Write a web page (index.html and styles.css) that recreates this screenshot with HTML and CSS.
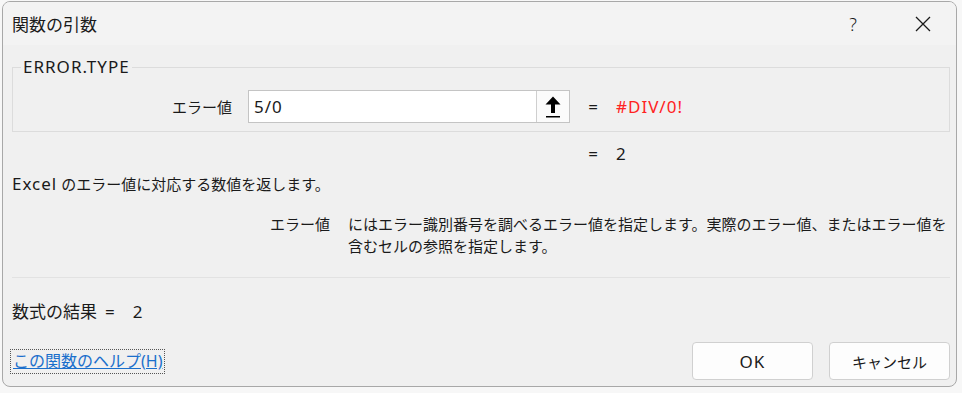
FILE: index.html
```html
<!DOCTYPE html>
<html lang="ja">
<head>
    <meta charset="UTF-8">
    <title>関数の引数</title>
    <link rel="stylesheet" href="styles.css">
</head>
<body>
    <div class="window">
        <div class="titlebar">
            <div class="title">関数の引数</div>
            <div class="caption-btn help">?</div>
            <div class="caption-btn close">
                <svg width="16" height="16" viewBox="0 0 16 16"><path d="M1 1 L15 15 M15 1 L1 15" stroke="#1a1a1a" stroke-width="1.3" fill="none"/></svg>
            </div>
        </div>
        <div class="content">
            <fieldset class="group">
                <legend class="lat">ERROR.TYPE</legend>
                <div class="argrow">
                    <div class="arglabel">エラー値</div>
                    <div class="argbox">
                        <div class="argvalue lat">5/0</div>
                        <div class="refbtn">
                            <svg width="16" height="24" viewBox="0 0 16 24">
                                <polygon points="0.5,9.5 8,1.5 15.5,9.5 10,9.5 10,18 6,18 6,9.5" fill="#000"/>
                                <rect x="1" y="21" width="14" height="1.5" fill="#000"/>
                            </svg>
                        </div>
                    </div>
                    <div class="eq lat">=</div>
                    <div class="res lat error">#DIV/0!</div>
                </div>
            </fieldset>

            <div class="argrow result">
                <div></div>
                <div></div>
                <div class="eq lat">=</div>
                <div class="res lat">2</div>
            </div>

            <div class="summary"><span class="lat">Excel</span> のエラー値に対応する数値を返します。</div>

            <div class="argdesc">
                <div class="argdesc-name">エラー値</div>
                <div class="argdesc-text">にはエラー識別番号を調べるエラー値を指定します。実際のエラー値、またはエラー値を含むセルの参照を指定します。</div>
            </div>

            <div class="separator"></div>

            <div class="formula">数式の結果<span class="lat formula-eq">=</span><span class="lat formula-val">2</span></div>

            <div class="footer">
                <a class="helplink" href="#">この関数のヘルプ(H)</a>
                <div class="buttons">
                    <div class="btn"><span class="lat">OK</span></div>
                    <div class="btn">キャンセル</div>
                </div>
            </div>
        </div>
    </div>
</body>
</html>
```

FILE: styles.css
```css
body {
    margin: 0;
    background-color: #f7f7f7;
    font-family: "Noto Sans", "Noto Sans CJK JP", sans-serif;
    font-size: 15px;
    color: #1a1a1a;
}
.lat {
    font-size: 17px;
    letter-spacing: 1px;
}
.window {
    width: 955px;
    height: 386px;
    margin: 1px 0 0 2px;
    border: 1px solid #a8a8a8;
    border-radius: 8px;
    background-color: #f0f0f0;
    overflow: hidden;
    box-sizing: border-box;
}
.titlebar {
    height: 43px;
    display: flex;
    align-items: center;
    background-color: #f3f3f3;
}
.title {
    flex: 1;
    padding-left: 9px;
    font-size: 17px;
}
.caption-btn {
    width: 46px;
    height: 43px;
    display: flex;
    align-items: center;
    justify-content: center;
}
.help {
    font-size: 18px;
    font-weight: 300;
    margin-right: 24px;
}
.close {
    margin-right: 10px;
}
.content {
    padding: 0 6px 0 9px;
}
.group {
    margin: 12px 0 0 0;
    padding: 13px 0 8px 0;
    border: 1px solid #dcdcdc;
    width: 938px;
    box-sizing: border-box;
}
.group legend {
    margin-left: 8px;
    padding: 0 2px;
    line-height: 20px;
}
.argrow {
    display: grid;
    grid-template-columns: 219px 322px 14px 1fr;
    column-gap: 16px;
    align-items: center;
}
.arglabel {
    text-align: right;
}
.argbox {
    height: 33px;
    display: flex;
    border: 1px solid #c4c4c4;
    background-color: #fff;
    box-sizing: border-box;
}
.argvalue {
    flex: 1;
    padding-left: 5px;
    line-height: 31px;
}
.refbtn {
    width: 32px;
    border-left: 1px solid #cfcfcf;
    background-color: #fbfbfb;
    display: flex;
    align-items: center;
    justify-content: center;
}
.eq {
    text-align: center;
    letter-spacing: 0;
}
.error {
    color: #ff2222;
}
.result {
    margin-top: 12px;
    padding-left: 1px;
    line-height: 20px;
}
.summary {
    margin-top: 10px;
    line-height: 20px;
}
.argdesc {
    margin-top: 19px;
    display: flex;
    line-height: 22px;
}
.argdesc-name {
    width: 336px;
    text-align: right;
    padding-right: 18px;
    box-sizing: border-box;
    flex-shrink: 0;
}
.argdesc-text {
    width: 604px;
}
.separator {
    margin-top: 20px;
    height: 1px;
    width: 938px;
    background-color: #e2e2e2;
}
.formula {
    margin-top: 24px;
    line-height: 20px;
    font-size: 17px;
}
.formula-eq {
    margin-left: 8px;
}
.formula-val {
    margin-left: 17px;
}
.footer {
    margin-top: 20px;
    display: flex;
    align-items: center;
    justify-content: space-between;
    width: 938px;
}
.helplink {
    color: #1a6fcc;
    border: 1px dotted #555;
    padding: 0 2px;
    margin-left: -2px;
    line-height: 23px;
    font-size: 16px;
}
.buttons {
    display: flex;
    gap: 16px;
}
.btn {
    width: 121px;
    height: 38px;
    box-sizing: border-box;
    border: 1px solid #d0d0d0;
    border-radius: 4px;
    background-color: #fdfdfd;
    display: flex;
    align-items: center;
    justify-content: center;
}
```
